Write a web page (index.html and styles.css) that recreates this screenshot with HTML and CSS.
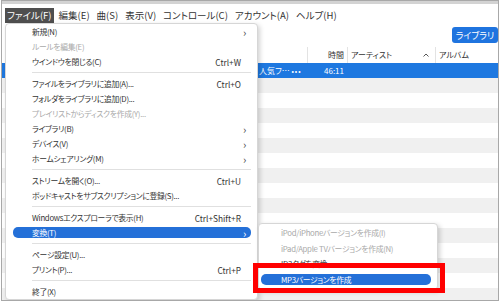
FILE: index.html
```html
<!DOCTYPE html>
<html lang="ja">
<head>
  <meta charset="UTF-8" />
  <title>iTunes – ファイル</title>
  <link rel="stylesheet" href="styles.css">
</head>
<body>

  <div class="window">
    <div class="titlebar"></div>

    <div class="menubar">
      <span class="open">ファイル(F)</span>
      <span>編集(E)</span>
      <span>曲(S)</span>
      <span>表示(V)</span>
      <span>コントロール(C)</span>
      <span>アカウント(A)</span>
      <span>ヘルプ(H)</span>
    </div>

    <div class="toolbar">
      <button class="lib-btn">ライブラリ</button>
    </div>

    <div class="songs">
      <div class="row head">
        <div></div>
        <div class="cell"></div>
        <div class="cell right">時間</div>
        <div class="cell">アーティスト<svg class="sort" width="6" height="4" viewBox="0 0 6 4"><path d="M0.5 3.5 L3 1 L5.5 3.5" fill="none" stroke="#444" stroke-width="0.9"/></svg></div>
        <div class="cell">アルバム</div>
      </div>
      <div class="row selected">
        <div></div>
        <div class="name">人気フ… <span class="dots">•••</span></div>
        <div class="right">46:11</div>
        <div></div>
        <div></div>
      </div>
      <div class="row"></div>
      <div class="row"></div>
      <div class="row"></div>
      <div class="row"></div>
      <div class="row"></div>
      <div class="row"></div>
      <div class="row"></div>
      <div class="row"></div>
      <div class="row"></div>
      <div class="row"></div>
      <div class="row"></div>
      <div class="row"></div>
      <div class="row"></div>
      <div class="row"></div>
      <div class="row"></div>
    </div>

    <!-- file menu -->
    <div class="dropdown">
      <div class="item"><span class="label">新規(N)</span><span class="key"></span><span class="arrow">›</span></div>
      <div class="item off"><span class="label">ルールを編集(E)</span><span class="key"></span><span class="arrow"></span></div>
      <div class="item"><span class="label">ウインドウを閉じる(C)</span><span class="key">Ctrl+W</span><span class="arrow"></span></div>
      <div class="sep"></div>
      <div class="item"><span class="label">ファイルをライブラリに追加(A)...</span><span class="key">Ctrl+O</span><span class="arrow"></span></div>
      <div class="item"><span class="label">フォルダをライブラリに追加(D)...</span><span class="key"></span><span class="arrow"></span></div>
      <div class="item off"><span class="label">プレイリストからディスクを作成(Y)...</span><span class="key"></span><span class="arrow"></span></div>
      <div class="item"><span class="label">ライブラリ(B)</span><span class="key"></span><span class="arrow">›</span></div>
      <div class="item"><span class="label">デバイス(V)</span><span class="key"></span><span class="arrow">›</span></div>
      <div class="item"><span class="label">ホームシェアリング(M)</span><span class="key"></span><span class="arrow">›</span></div>
      <div class="sep"></div>
      <div class="item"><span class="label">ストリームを開く(O)...</span><span class="key">Ctrl+U</span><span class="arrow"></span></div>
      <div class="item"><span class="label">ポッドキャストをサブスクリプションに登録(S)...</span><span class="key"></span><span class="arrow"></span></div>
      <div class="sep"></div>
      <div class="item"><span class="label">Windowsエクスプローラで表示(H)</span><span class="key">Ctrl+Shift+R</span><span class="arrow"></span></div>
      <div class="item hl"><span class="label">変換(T)</span><span class="key"></span><span class="arrow">›</span></div>
      <div class="sep"></div>
      <div class="item"><span class="label">ページ設定(U)...</span><span class="key"></span><span class="arrow"></span></div>
      <div class="item"><span class="label">プリント(P)...</span><span class="key">Ctrl+P</span><span class="arrow"></span></div>
      <div class="sep"></div>
      <div class="item"><span class="label">終了(X)</span><span class="key"></span><span class="arrow"></span></div>
    </div>

    <!-- convert submenu -->
    <div class="submenu">
      <div class="item off"><span class="label">iPod/iPhoneバージョンを作成(I)</span></div>
      <div class="item off"><span class="label">iPad/Apple TVバージョンを作成(N)</span></div>
      <div class="item"><span class="label">ID3タグを変換...</span></div>
      <div class="item hl"><span class="label">MP3バージョンを作成</span></div>
    </div>

    <div class="callout"></div>
  </div>

</body>
</html>
```

FILE: styles.css
```css
body {
  margin: 0;
  background: #fff;
  font-family: "Noto Sans CJK JP", "Noto Sans", sans-serif;
  font-feature-settings: "palt" 1;
  color: #333;
}
.window {
  position: relative;
  margin: 0 1px;
  height: 299px;
  border: 1px solid #a8a8a8;
  overflow: hidden;
  background: #fff;
}
.titlebar {
  height: 3px;
  background: #d3d3d3;
}
.menubar {
  display: flex;
  gap: 3px;
  height: 20px;
  padding: 4px 0 0 3px;
  box-sizing: border-box;
  font-size: 9.5px;
}
.menubar span {
  height: 15px;
  line-height: 15px;
  padding: 0 2px;
}
.menubar .open {
  background: #4f4f4f;
  color: #fff;
}
.toolbar {
  height: 23px;
  display: flex;
  justify-content: flex-end;
  align-items: flex-start;
  padding: 3px 0 0 0;
  box-sizing: border-box;
}
.lib-btn {
  width: 46px;
  height: 16px;
  padding: 0;
  border: none;
  border-radius: 3px;
  background: #1f74df;
  color: #fff;
  font: inherit;
  font-size: 9px;
}
.row {
  display: grid;
  grid-template-columns: 255px 50px 40px 88px 1fr;
  height: 15px;
  line-height: 15px;
  font-size: 8px;
}
.row:nth-child(odd) {
  background: #f0f0f0;
}
.row.head {
  height: 16px;
  line-height: 16px;
  background: #fff;
}
.head .cell {
  position: relative;
  border-left: 1px solid #e3e3e3;
  padding: 0 3px;
}
.head .sort {
  position: absolute;
  right: 6px;
  top: 6px;
}
.right {
  text-align: right;
  padding-right: 3px;
}
.row.selected {
  background: #1e78e0;
  color: #fff;
}
.name {
  padding-left: 2px;
  white-space: nowrap;
}
.dots {
  font-size: 7px;
  letter-spacing: 1px;
}

/* menus */
.dropdown, .submenu {
  position: absolute;
  background: #fff;
  border: 1px solid #d6d6d6;
  border-radius: 4px;
  box-shadow: 2px 2px 5px rgba(0, 0, 0, 0.18);
  font-size: 7.8px;
  letter-spacing: -0.3px;
}
.dropdown {
  left: 3px;
  top: 22px;
  width: 251px;
}
.submenu {
  left: 256px;
  top: 222px;
  width: 178px;
  padding: 1px 0 2px;
}
.item {
  position: relative;
  display: flex;
  align-items: center;
  height: 15px;
  padding-left: 26px;
  white-space: nowrap;
}
.submenu .item {
  height: 15.6px;
  padding-left: 22px;
}
.item span {
  position: relative;
}
.item .label {
  flex: 1;
}
.item .key {
  padding-right: 2px;
  font-size: 8.3px;
  letter-spacing: 0;
}
.item .arrow {
  width: 14px;
  font-size: 11px;
  color: #444;
}
.item.off {
  color: #a9a9a9;
}
.item.hl {
  color: #fff;
}
.item.hl::before {
  content: "";
  position: absolute;
  left: 7px;
  right: 6px;
  top: 2px;
  bottom: 2px;
  background: #2470d8;
  border-radius: 5px;
}
.submenu .item.hl::before {
  left: 2px;
  right: 6px;
}
.item.hl .arrow {
  color: #fff;
}
.sep {
  height: 7px;
  margin: 0 6px 0 26px;
  background: linear-gradient(#e0e0e0, #e0e0e0) center / 100% 1px no-repeat;
}
.callout {
  position: absolute;
  left: 251px;
  top: 262px;
  width: 192px;
  height: 30px;
  box-sizing: border-box;
  border: 5px solid #f00;
}
```
